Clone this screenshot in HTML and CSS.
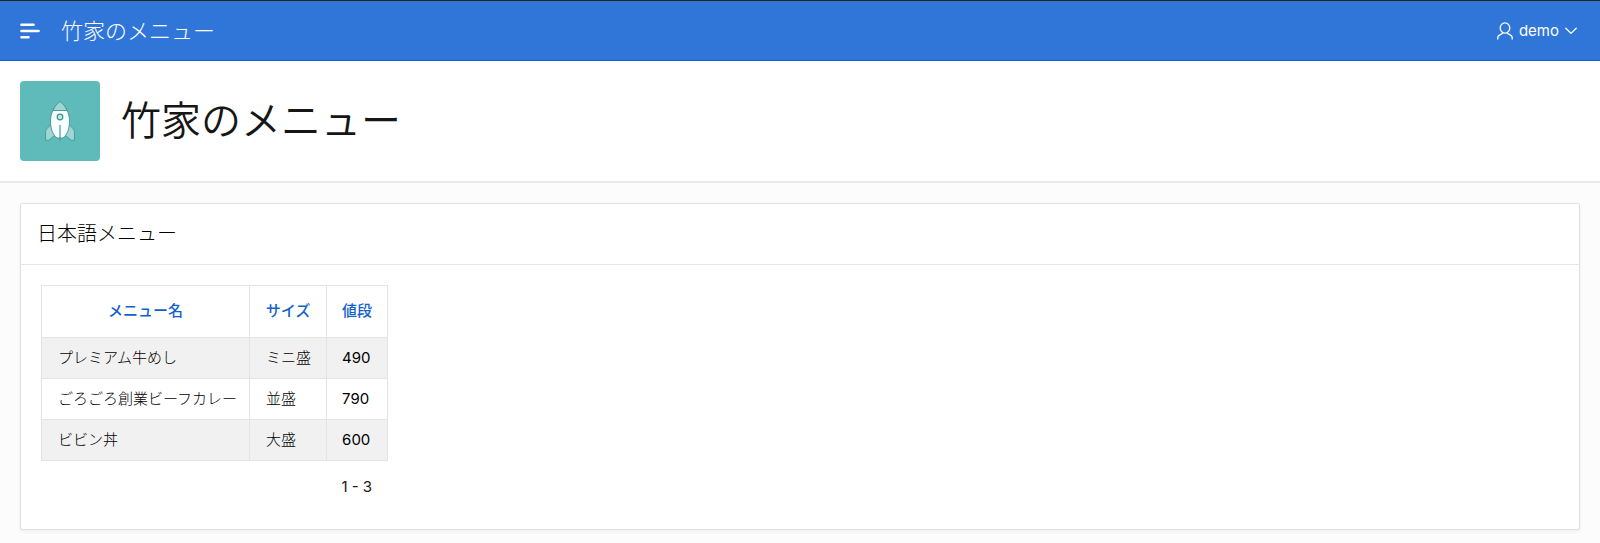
FILE: index.html
```
<!DOCTYPE html>
<html lang="ja">
<head>
    <meta charset="UTF-8">
    <meta name="viewport" content="width=device-width, initial-scale=1.0">
    <title>竹家のメニュー</title>
    <link rel="stylesheet" href="styles.css">
</head>
<body>
    <header class="header">
        <button class="nav-toggle" type="button" aria-label="ナビゲーション">
            <svg width="20" height="16" viewBox="0 0 20 16" fill="none" stroke="currentColor" stroke-width="2.6" stroke-linecap="round">
                <path d="M1.5 1.8H13.5M1.5 8H18.5M1.5 14.2H8.5"/>
            </svg>
        </button>
        <a class="logo" href="#">竹家のメニュー</a>
        <button class="user-menu" type="button">
            <svg width="16" height="18" viewBox="0 0 16 18" fill="none" stroke="currentColor" stroke-width="1.3" stroke-linecap="round">
                <ellipse cx="8" cy="6" rx="4.8" ry="5.2"/>
                <path d="M.8 17V15.6C.8 13.6 3 12.6 5.6 11.4V10.3M15.2 17V15.6C15.2 13.6 13 12.6 10.4 11.4V10.3"/>
            </svg>
            <span>demo</span>
            <svg width="12" height="8" viewBox="0 0 12 8" fill="none" stroke="currentColor" stroke-width="1.3" stroke-linecap="round" stroke-linejoin="round">
                <path d="M.8 1.2 6 6.4 11.2 1.2"/>
            </svg>
        </button>
    </header>

    <div class="hero">
        <span class="hero-icon">
            <svg width="32" height="42" viewBox="0 0 32 42" stroke="#489c99" stroke-width="1">
                <path fill="#9fd5d3" d="M8 24.5C4 27 1.5 29 1.5 33V40.2H5L10.5 35.5ZM24 24.5C28 27 30.5 29 30.5 33V40.2H27L21.5 35.5Z"/>
                <path fill="#f8fdfd" d="M16 1.5C9.5 6 6.5 14 6.5 21 6.5 29 9 35 13 38H19C23 35 25.5 29 25.5 21 25.5 14 22.5 6 16 1.5Z"/>
                <path fill="#9fd5d3" d="M16 1.5C13 3.5 10.5 7 9 10.5H23C21.5 7 19 3.5 16 1.5Z"/>
                <circle cx="16" cy="17" r="2.8" fill="#c5e5e4" stroke="#329a97" stroke-width="1.2"/>
                <path d="M16 25V41" stroke-width="1.2"/>
            </svg>
        </span>
        <h1>竹家のメニュー</h1>
    </div>

    <main class="content">
        <section class="region">
            <h2 class="region-title">日本語メニュー</h2>
            <div class="region-body">
                <div class="report">
                    <table>
                        <thead>
                            <tr>
                                <th class="col-name" scope="col"><a href="#">メニュー名</a></th>
                                <th class="col-size" scope="col"><a href="#">サイズ</a></th>
                                <th class="col-price" scope="col"><a href="#">値段</a></th>
                            </tr>
                        </thead>
                        <tbody>
                            <tr><td>プレミアム牛めし</td><td>ミニ盛</td><td>490</td></tr>
                            <tr><td>ごろごろ創業ビーフカレー</td><td>並盛</td><td>790</td></tr>
                            <tr><td>ビビン丼</td><td>大盛</td><td>600</td></tr>
                        </tbody>
                    </table>
                    <p class="pagination">1 - 3</p>
                </div>
            </div>
        </section>
    </main>
</body>
</html>
```
FILE: styles.css
```
* {
    box-sizing: border-box;
}

body {
    margin: 0;
    background-color: #fcfcfc;
    color: #161616;
    font-family: Inter, "Noto Sans CJK JP", sans-serif;
    font-size: 15px;
    line-height: 20px;
}

h1, h2, p {
    margin: 0;
}

a {
    color: inherit;
    text-decoration: none;
}

button {
    padding: 0;
    border: none;
    background: none;
    color: inherit;
    font: inherit;
    cursor: pointer;
}

svg {
    display: block;
}

/* Top bar */
.header {
    display: flex;
    align-items: center;
    height: 61px;
    padding: 0 23px 0 20px;
    border-top: 1px solid #2b2416;
    border-bottom: 1px solid #0d66d0;
    background-color: #3076d9;
    color: #fff;
}

.logo {
    margin-left: 21px;
    font-size: 22px;
    font-weight: 300;
    line-height: 32px;
}

.user-menu {
    display: flex;
    align-items: center;
    gap: 6px;
    margin-left: auto;
}

/* Page title */
.hero {
    display: flex;
    align-items: center;
    gap: 21px;
    padding: 20px;
    border-bottom: 2px solid #e9e9e9;
    background-color: #fff;
}

.hero-icon {
    display: flex;
    align-items: center;
    justify-content: center;
    width: 80px;
    height: 80px;
    border-radius: 4px;
    background-color: #5fbbba;
}

h1 {
    font-size: 40px;
    font-weight: 350;
    line-height: 48px;
}

/* Region */
.content {
    padding: 20px;
}

.region {
    border: 1px solid #e0e0e0;
    border-radius: 2px;
    background-color: #fff;
    box-shadow: 0 2px 4px rgba(0, 0, 0, 0.05);
}

.region-title {
    padding: 14px 16px;
    border-bottom: 1px solid #e6e6e6;
    color: #000;
    font-size: 20px;
    font-weight: 300;
    line-height: 32px;
}

.region-body {
    padding: 20px;
}

/* Report */
.report {
    width: fit-content;
}

table {
    border-collapse: collapse;
}

th, td {
    padding: 10px 12px 10px 16px;
    border: 1px solid #e4e4e4;
    text-align: left;
}

td {
    color: #000;
    font-weight: 300;
}

th {
    padding: 15px 12px 16px;
    color: #1161cb;
    font-weight: 500;
    text-align: center;
}

td:last-child {
    padding-left: 15px;
    font-weight: 400;
}

.col-size {
    width: 77px;
}

.col-price {
    width: 61px;
}

tbody tr:nth-child(odd) {
    background-color: #f1f1f1;
}

.pagination {
    padding: 16px 16px 12px;
    text-align: right;
}
```
